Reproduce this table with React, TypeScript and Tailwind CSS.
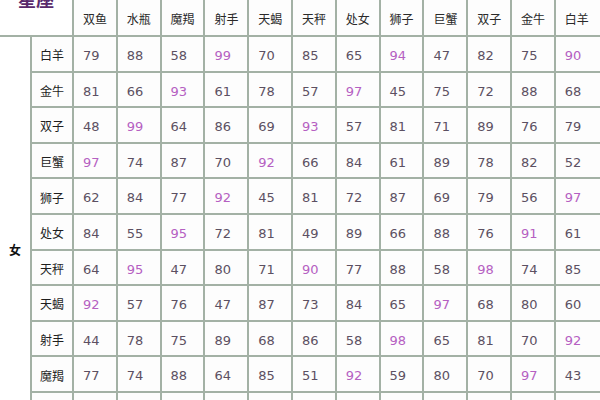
import React from 'react';

const signs = ['双鱼', '水瓶', '魔羯', '射手', '天蝎', '天秤', '处女', '狮子', '巨蟹', '双子', '金牛', '白羊'];

const rows: { name: string; scores: number[] }[] = [
  { name: '白羊', scores: [79, 88, 58, 99, 70, 85, 65, 94, 47, 82, 75, 90] },
  { name: '金牛', scores: [81, 66, 93, 61, 78, 57, 97, 45, 75, 72, 88, 68] },
  { name: '双子', scores: [48, 99, 64, 86, 69, 93, 57, 81, 71, 89, 76, 79] },
  { name: '巨蟹', scores: [97, 74, 87, 70, 92, 66, 84, 61, 89, 78, 82, 52] },
  { name: '狮子', scores: [62, 84, 77, 92, 45, 81, 72, 87, 69, 79, 56, 97] },
  { name: '处女', scores: [84, 55, 95, 72, 81, 49, 89, 66, 88, 76, 91, 61] },
  { name: '天秤', scores: [64, 95, 47, 80, 71, 90, 77, 88, 58, 98, 74, 85] },
  { name: '天蝎', scores: [92, 57, 76, 47, 87, 73, 84, 65, 97, 68, 80, 60] },
  { name: '射手', scores: [44, 78, 75, 89, 68, 86, 58, 98, 65, 81, 70, 92] },
  { name: '魔羯', scores: [77, 74, 88, 64, 85, 51, 92, 59, 80, 70, 97, 43] },
  { name: '水瓶', scores: [75, 89, 62, 96, 81, 93, 70, 83, 55, 91, 67, 88] },
  { name: '双鱼', scores: [86, 73, 94, 52, 90, 79, 68, 91, 96, 63, 85, 72] },
];

const App: React.FC = () => {
  return (
    <div className="w-[600px] h-[400px] overflow-hidden bg-white font-['DejaVu_Sans','Noto_Sans_CJK_SC',sans-serif]">
      <div className="-mt-[22px] w-[660px] grid grid-cols-[30px_40px_repeat(11,41.8px)_60px] grid-rows-[20px_35px_repeat(12,33.6px)] gap-[2px] bg-[#a3b1a5]">
        {/* top-left title */}
        <div className="col-span-2 row-span-2 bg-white flex justify-center pt-[12px]">
          <span className="text-[18px] leading-[18px] font-bold text-[#5a2a6c] font-['Noto_Sans_CJK_SC',sans-serif]">
            星座
          </span>
        </div>
        <div className="col-span-12 bg-white flex items-center justify-center text-[13px] font-['Noto_Sans_CJK_SC',sans-serif]">
          男
        </div>

        {/* column headers */}
        {signs.map((s) => (
          <div
            key={s}
            className="bg-[#fdfdfd] flex items-center pl-[9px] pt-[2px] text-[12px] text-[#2a2a2a] font-['Noto_Sans_CJK_SC',sans-serif]"
          >
            {s}
          </div>
        ))}

        {/* gender label */}
        <div className="row-span-12 bg-white flex items-center justify-center text-[12px] font-bold text-[#111] font-['Noto_Sans_CJK_SC',sans-serif]">
          女
        </div>

        {rows.map((r) => (
          <React.Fragment key={r.name}>
            <div className="bg-[#fdfdfd] flex items-center pl-2 pt-[3px] text-[12px] text-[#1e1e1e] font-['Noto_Sans_CJK_SC',sans-serif]">
              {r.name}
            </div>
            {r.scores.map((v, i) => (
              <div
                key={i}
                className={`bg-[#fdfdfd] flex items-center pl-[9px] pt-[4px] text-[13px] ${
                  v >= 90 ? 'text-[#b560c2]' : 'text-[#5c5062]'
                }`}
              >
                {v}
              </div>
            ))}
          </React.Fragment>
        ))}
      </div>
    </div>
  );
};

export default App;
